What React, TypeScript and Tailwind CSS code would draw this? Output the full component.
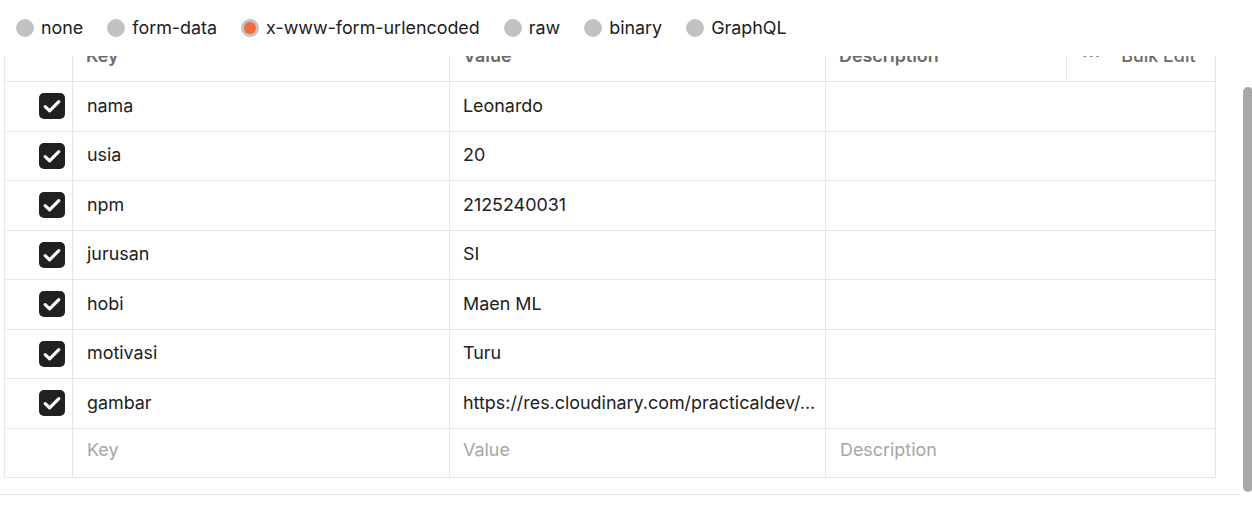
import React from "react";

const radios = [
  { label: "none", selected: false },
  { label: "form-data", selected: false },
  { label: "x-www-form-urlencoded", selected: true },
  { label: "raw", selected: false },
  { label: "binary", selected: false },
  { label: "GraphQL", selected: false },
];

const rows = [
  ["nama", "Leonardo"],
  ["usia", "20"],
  ["npm", "2125240031"],
  ["jurusan", "SI"],
  ["hobi", "Maen ML"],
  ["motivasi", "Turu"],
  ["gambar", "https://res.cloudinary.com/practicaldev/..."],
];

function Check() {
  return (
    <div className="w-[26px] h-[26px] rounded-[5px] bg-[#212121] flex items-center justify-center">
      <svg width="26" height="26" viewBox="0 0 26 26" fill="none">
        <path d="M6.2 13.6 L10.6 17.8 L19.8 8.6" stroke="white" strokeWidth="3.2" strokeLinecap="round" strokeLinejoin="round" />
      </svg>
    </div>
  );
}

export default function App() {
  return (
    <div
      className="relative w-[1252px] h-[507px] bg-white overflow-hidden text-[#212121]"
      style={{ fontFamily: "Inter, 'Noto Sans', sans-serif" }}
    >
      <div className="h-[56px] flex items-start pt-[19px] pl-[16px] gap-[24px] text-[17.9px] leading-[18px]">
        {radios.map((r) => (
          <div key={r.label} className="flex items-center gap-[7px]">
            {r.selected ? (
              <div className="w-[18px] h-[18px] rounded-full bg-[#c2c2c2] flex items-center justify-center">
                <div className="w-[12px] h-[12px] rounded-full bg-[#f26b3a]" />
              </div>
            ) : (
              <div className="w-[18px] h-[18px] rounded-full bg-[#c2c2c2]" />
            )}
            <span>{r.label}</span>
          </div>
        ))}
      </div>
      <div className="h-[438px] overflow-hidden">
        <div className="ml-[4px] w-[1212px] -mt-[24px] border-l border-r border-[#e6e6e6] text-[17.9px]">
          <div className="h-[50px] flex border-b border-[#e6e6e6] text-[#6b6b6b] font-semibold">
            <div className="w-[68px] border-r border-[#e6e6e6]" />
            <div className="w-[377px] border-r border-[#e6e6e6] flex items-center pl-[13px]">Key</div>
            <div className="w-[376px] border-r border-[#e6e6e6] flex items-center pl-[13px]">Value</div>
            <div className="w-[241px] border-r border-[#e6e6e6] flex items-center pl-[13px]">Description</div>
            <div className="flex-1 flex items-center pl-[15px] font-medium">
              <span className="tracking-[1px]">···</span>
              <span className="ml-[20px]">Bulk Edit</span>
            </div>
          </div>
          {rows.map(([k, v]) => (
            <div key={k} className="h-[49.5px] flex border-b border-[#e6e6e6]">
              <div className="w-[68px] border-r border-[#e6e6e6] flex items-center justify-end pr-[7px]">
                <Check />
              </div>
              <div className="w-[377px] border-r border-[#e6e6e6] flex items-center pl-[14px]">{k}</div>
              <div className="w-[376px] border-r border-[#e6e6e6] flex items-center pl-[13px] whitespace-nowrap overflow-hidden">{v}</div>
              <div className="flex-1" />
            </div>
          ))}
          <div className="h-[49.5px] flex border-b border-[#e6e6e6] text-[#a6a6a6] pb-[4px]">
            <div className="w-[68px] border-r border-[#e6e6e6] -mb-[4px]" />
            <div className="w-[377px] border-r border-[#e6e6e6] -mb-[4px] pb-[4px] flex items-center pl-[14px]">Key</div>
            <div className="w-[376px] border-r border-[#e6e6e6] -mb-[4px] pb-[4px] flex items-center pl-[13px]">Value</div>
            <div className="flex-1 flex items-center pl-[14px]">Description</div>
          </div>
        </div>
      </div>
      <div className="w-[1240px] border-t border-[#e6e6e6]" />
      <div className="absolute left-[1243px] top-[87px] w-[10px] h-[405px] rounded-[5px] bg-[#a8a8a8]" />
    </div>
  );
}
